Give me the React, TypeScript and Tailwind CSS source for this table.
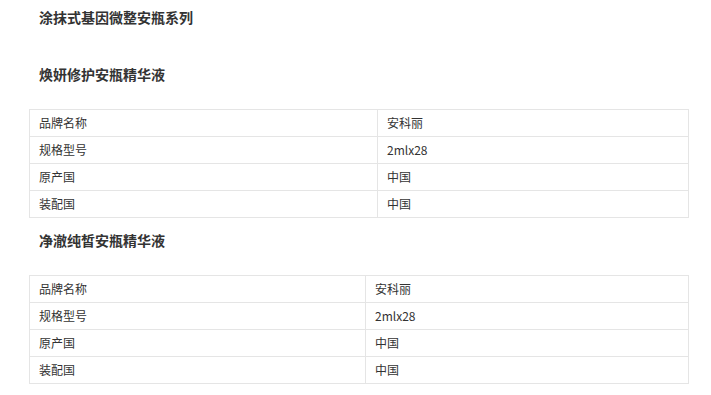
const specs = [
  { label: '品牌名称', value: '安科丽' },
  { label: '规格型号', value: '2mlx28' },
  { label: '原产国', value: '中国' },
  { label: '装配国', value: '中国' },
];

function SpecTable({ firstCol }: { firstCol: string }) {
  return (
    <table className="border-collapse w-[660px] table-fixed">
      <tbody>
        {specs.map((s) => (
          <tr key={s.label}>
            <td className={`${firstCol} h-[27px] border border-[#e5e5e5] pl-[9px] text-[12px] text-[#333] align-middle`}>
              {s.label}
            </td>
            <td className="h-[27px] border border-[#e5e5e5] pl-[9px] text-[12px] text-[#333] align-middle">
              {s.value}
            </td>
          </tr>
        ))}
      </tbody>
    </table>
  );
}

export default function App() {
  return (
    <div
      className="min-h-[395px] w-[711px] bg-white pl-[29px]"
      style={{ fontFamily: '"Noto Sans CJK SC", "Liberation Sans", sans-serif' }}
    >
      <div className="h-[34px] flex items-center pl-[10px] text-[14px] font-bold text-[#333]">
        涂抹式基因微整安瓶系列
      </div>
      <div className="mt-[23px] h-[34px] flex items-center pl-[10px] text-[14px] font-bold text-[#333]">
        焕妍修护安瓶精华液
      </div>
      <div className="mt-[18px]">
        <SpecTable firstCol="w-[348px]" />
      </div>
      <div className="mt-[5px] h-[34px] flex items-center pl-[10px] text-[14px] font-bold text-[#333]">
        净澈纯皙安瓶精华液
      </div>
      <div className="mt-[18px]">
        <SpecTable firstCol="w-[336px]" />
      </div>
    </div>
  );
}
